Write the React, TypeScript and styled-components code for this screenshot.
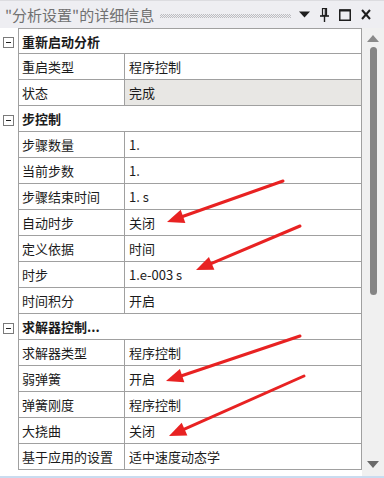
import React from "react";
import styled, { createGlobalStyle } from "styled-components";

const GlobalStyle = createGlobalStyle`
  html, body { margin: 0; padding: 0; background: #ffffff; }
  body { font-family: "Noto Sans CJK SC", "Noto Sans", sans-serif; }
`;

const Window = styled.div`
  position: relative;
  width: 384px;
  height: 478px;
  display: flex;
  flex-direction: column;
  background: #ffffff;
  overflow: hidden;
  box-sizing: border-box;
`;

const TitleBar = styled.div`
  height: 28px;
  flex: none;
  display: flex;
  align-items: center;
  background: #eeeef2;
  border-top: 1px solid #dcdce0;
  box-sizing: border-box;
  padding: 0 13px 0 5px;
  gap: 6px;
`;

const TitleText = styled.span`
  font-size: 15px;
  color: #717171;
  white-space: nowrap;
`;

const Gripper = styled.div`
  flex: 1;
  height: 4px;
  margin-top: 2px;
  background-image: conic-gradient(#bcbcc0 25%, transparent 0 50%, #bcbcc0 0 75%, transparent 0);
  background-size: 2px 2px;
`;

const TitleIcons = styled.div`
  display: flex;
  align-items: center;
  gap: 10px;
  margin-left: 2px;
`;

const Body = styled.div`
  flex: 1;
  display: flex;
  min-height: 0;
`;

const Grid = styled.div`
  width: 362px;
  flex: none;
  display: flex;
  flex-direction: column;
`;

const Row = styled.div`
  display: grid;
  grid-template-columns: 18px 106px 1fr;
  height: 26px;
`;

const Gutter = styled.div`
  display: flex;
  align-items: center;
  justify-content: flex-start;
  padding-left: 3px;
  background: #ffffff;
`;

const Expander = styled.div`
  width: 9px;
  height: 9px;
  border: 1px solid #7a7a7a;
  background: #ffffff;
  position: relative;
  margin-top: 2px;
  &::after {
    content: "";
    position: absolute;
    left: 2px;
    top: 4px;
    width: 5px;
    height: 1px;
    background: #222;
  }
`;

const Cell = styled.div<{ $first?: boolean; $span?: boolean; $shade?: boolean; $value?: boolean }>`
  grid-column: ${(p) => (p.$span ? "2 / 4" : "auto")};
  border-left: 1px solid #a0a0a0;
  border-bottom: 1px solid #a0a0a0;
  border-top: ${(p) => (p.$first ? "1px solid #a0a0a0" : "none")};
  border-right: ${(p) => (p.$value || p.$span ? "1px solid #a0a0a0" : "none")};
  background: ${(p) => (p.$shade ? "#e8e7e4" : "#ffffff")};
  display: flex;
  align-items: center;
  padding-left: ${(p) => (p.$value ? "4px" : "3px")};
  font-size: 13px;
  color: #1b1b1b;
  white-space: nowrap;
  overflow: hidden;
  box-sizing: border-box;
`;

const GroupCell = styled(Cell)`
  font-weight: 700;
`;

const Scrollbar = styled.div`
  flex: 1;
  background: #f0f0f0;
  display: flex;
  flex-direction: column;
  align-items: center;
  padding: 7px 0 8px;
  box-sizing: border-box;
`;

const Thumb = styled.div`
  width: 7px;
  height: 248px;
  margin-top: 5px;
  border-radius: 4px;
  background: #858585;
`;

const Spacer = styled.div`
  flex: 1;
`;

const BottomLine = styled.div`
  height: 2px;
  flex: none;
  background: #c9dcf0;
`;

const ArrowLayer = styled.svg`
  position: absolute;
  left: 0;
  top: 0;
  pointer-events: none;
`;

type Item =
  | { kind: "group"; label: string }
  | { kind: "prop"; label: string; value: string; shade?: boolean };

const items: Item[] = [
  { kind: "group", label: "重新启动分析" },
  { kind: "prop", label: "重启类型", value: "程序控制" },
  { kind: "prop", label: "状态", value: "完成", shade: true },
  { kind: "group", label: "步控制" },
  { kind: "prop", label: "步骤数量", value: "1." },
  { kind: "prop", label: "当前步数", value: "1." },
  { kind: "prop", label: "步骤结束时间", value: "1. s" },
  { kind: "prop", label: "自动时步", value: "关闭" },
  { kind: "prop", label: "定义依据", value: "时间" },
  { kind: "prop", label: "时步", value: "1.e-003 s" },
  { kind: "prop", label: "时间积分", value: "开启" },
  { kind: "group", label: "求解器控制..." },
  { kind: "prop", label: "求解器类型", value: "程序控制" },
  { kind: "prop", label: "弱弹簧", value: "开启" },
  { kind: "prop", label: "弹簧刚度", value: "程序控制" },
  { kind: "prop", label: "大挠曲", value: "关闭" },
  { kind: "prop", label: "基于应用的设置", value: "适中速度动态学" },
];

const arrows: [number, number, number, number][] = [
  [283, 181, 167, 222],
  [300, 226, 196, 270],
  [300, 336, 166, 381],
  [304, 376, 169, 436],
];

function Arrow({ x1, y1, x2, y2 }: { x1: number; y1: number; x2: number; y2: number }) {
  const dx = x2 - x1;
  const dy = y2 - y1;
  const len = Math.sqrt(dx * dx + dy * dy);
  const ux = dx / len;
  const uy = dy / len;
  const headLen = 17;
  const headW = 7;
  const bx = x2 - ux * headLen;
  const by = y2 - uy * headLen;
  const px = -uy;
  const py = ux;
  const pts = `${x2},${y2} ${bx + px * headW},${by + py * headW} ${bx - px * headW},${by - py * headW}`;
  return (
    <g>
      <line x1={x1} y1={y1} x2={bx + ux * 2} y2={by + uy * 2} stroke="#e82222" strokeWidth={3} strokeLinecap="round" />
      <polygon points={pts} fill="#e82222" />
    </g>
  );
}

export default function App() {
  return (
    <>
      <GlobalStyle />
      <Window>
        <TitleBar>
          <TitleText>"分析设置"的详细信息</TitleText>
          <Gripper />
          <TitleIcons>
            <svg width="11" height="7" viewBox="0 0 11 7">
              <polygon points="0,0.5 11,0.5 5.5,6.5" fill="#1e1e1e" />
            </svg>
            <svg width="9" height="14" viewBox="0 0 9 14">
              <rect x="2.5" y="0.5" width="4" height="7" fill="none" stroke="#1e1e1e" strokeWidth="1.2" />
              <line x1="5.3" y1="1" x2="5.3" y2="7" stroke="#1e1e1e" strokeWidth="1.2" />
              <line x1="0" y1="8" x2="9" y2="8" stroke="#1e1e1e" strokeWidth="1.6" />
              <line x1="4.5" y1="8" x2="4.5" y2="14" stroke="#1e1e1e" strokeWidth="1.4" />
            </svg>
            <svg width="12" height="12" viewBox="0 0 12 12">
              <rect x="0.75" y="1" width="10.5" height="10.25" fill="none" stroke="#1e1e1e" strokeWidth="1.5" />
              <line x1="0.75" y1="1.5" x2="11.25" y2="1.5" stroke="#1e1e1e" strokeWidth="2" />
            </svg>
            <svg width="10" height="11" viewBox="0 0 10 11">
              <line x1="1" y1="1" x2="9" y2="10" stroke="#1e1e1e" strokeWidth="2" />
              <line x1="9" y1="1" x2="1" y2="10" stroke="#1e1e1e" strokeWidth="2" />
            </svg>
          </TitleIcons>
        </TitleBar>
        <Body>
          <Grid>
            {items.map((it, i) =>
              it.kind === "group" ? (
                <Row key={i}>
                  <Gutter>
                    <Expander />
                  </Gutter>
                  <GroupCell $span $first={i === 0}>
                    {it.label}
                  </GroupCell>
                </Row>
              ) : (
                <Row key={i}>
                  <Gutter />
                  <Cell $first={i === 0}>{it.label}</Cell>
                  <Cell $value $shade={it.shade} $first={i === 0}>
                    {it.value}
                  </Cell>
                </Row>
              )
            )}
          </Grid>
          <Scrollbar>
            <svg width="12" height="7" viewBox="0 0 12 7">
              <polygon points="6,0 12,7 0,7" fill="#8a8a8a" />
            </svg>
            <Thumb />
            <Spacer />
            <svg width="12" height="7" viewBox="0 0 12 7">
              <polygon points="0,0 12,0 6,7" fill="#6a6a6a" />
            </svg>
          </Scrollbar>
        </Body>
        <BottomLine />
        <ArrowLayer width="384" height="478" viewBox="0 0 384 478">
          {arrows.map(([x1, y1, x2, y2], i) => (
            <Arrow key={i} x1={x1} y1={y1} x2={x2} y2={y2} />
          ))}
        </ArrowLayer>
      </Window>
    </>
  );
}
